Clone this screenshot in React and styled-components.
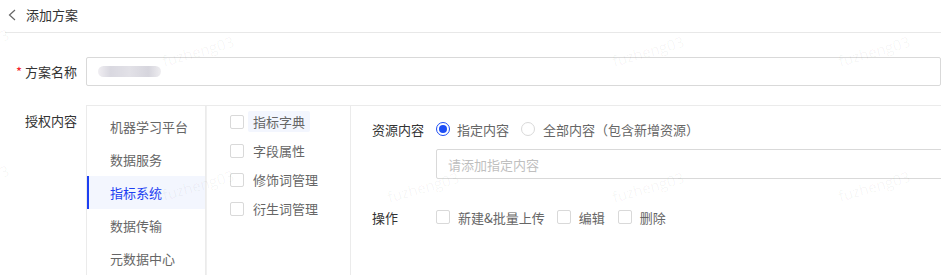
import React from "react";
import styled, { createGlobalStyle } from "styled-components";

const Global = createGlobalStyle`
  html, body { margin: 0; padding: 0; background: #fff; overflow: hidden; }
  body { font-family: "Noto Sans CJK SC", "Noto Sans", sans-serif; font-size: 13px; color: #333; }
  * { box-sizing: border-box; }
`;

const Page = styled.div`
  position: relative;
  width: 941px;
  height: 275px;
  overflow: hidden;
`;

const Header = styled.div`
  margin-left: 5px;
  height: 33px;
  border-bottom: 1px solid #e8e8e8;
  display: flex;
  align-items: center;
  gap: 10px;
  padding-left: 3px;
  padding-bottom: 3px;
  color: #333;
  font-size: 13px;
`;

const Form = styled.div`
  padding-left: 18px;
`;

const Row = styled.div`
  display: flex;
  align-items: ${(p) => (p.$top ? "flex-start" : "center")};
  margin-top: ${(p) => p.$mt}px;
`;

const Label = styled.div`
  width: 68px;
  flex: none;
  padding-right: 9px;
  display: flex;
  justify-content: flex-end;
  white-space: nowrap;
  color: #333;
  line-height: 20px;
  padding-top: ${(p) => (p.$pt ? p.$pt : 0)}px;
`;

const Star = styled.span`
  color: #f5222d;
  margin-right: 3px;
`;

const TextInput = styled.div`
  width: 900px;
  height: 29px;
  border: 1px solid #d9d9d9;
  border-radius: 2px;
  display: flex;
  align-items: center;
  padding-left: 11px;
  color: #bfbfbf;
`;

const Blur = styled.div`
  width: 63px;
  height: 11px;
  border-radius: 6px;
  background: linear-gradient(90deg, #f0eef2 0%, #d9d8e0 20%, #e2e1e7 50%, #d6d5dd 80%, #eeedf0 100%);
  filter: blur(0.6px);
`;

const Box = styled.div`
  display: flex;
  border-top: 1px solid #ebebeb;
  border-left: 1px solid #ebebeb;
  height: 180px;
  flex: 1;
`;

const NavCol = styled.div`
  width: 119px;
  flex: none;
  border-right: 1px solid #ebebeb;
  padding-top: 4px;
`;

const NavItem = styled.div`
  height: 33px;
  display: flex;
  align-items: center;
  padding-left: 21px;
  white-space: nowrap;
  color: ${(p) => (p.$active ? "#1d3ff2" : "#666")};
  background: ${(p) => (p.$active ? "#f3f6fe" : "transparent")};
  border-left: 2px solid ${(p) => (p.$active ? "#1d3ff2" : "transparent")};
`;

const SubCol = styled.div`
  width: 145px;
  flex: none;
  border-left: 1px solid #f0f0f0;
  border-right: 1px solid #ebebeb;
  padding-top: 1px;
  padding-left: 23px;
`;

const SubItem = styled.div`
  height: 29px;
  display: flex;
  align-items: center;
  gap: 4px;
`;

const Check = styled.span`
  width: 14px;
  height: 14px;
  flex: none;
  border: 1px solid #d9d9d9;
  border-radius: 2px;
  background: #fff;
`;

const SubLabel = styled.span`
  padding: 1px 5px;
  border-radius: 2px;
  color: #666;
  line-height: 19px;
  background: ${(p) => (p.$hover ? "#f3f6fe" : "transparent")};
`;

const Detail = styled.div`
  flex: 1;
  padding-top: 12px;
  padding-left: 21px;
`;

const DRow = styled.div`
  display: flex;
  align-items: center;
  height: 22px;
  margin-top: ${(p) => p.$mt || 0}px;
`;

const DLabel = styled.div`
  width: 64px;
  flex: none;
  color: #333;
`;

const Radio = styled.span`
  width: 14px;
  height: 14px;
  flex: none;
  border-radius: 50%;
  border: 1px solid ${(p) => (p.$on ? "#1d4ef5" : "#d9d9d9")};
  display: flex;
  align-items: center;
  justify-content: center;
  &::after {
    content: "";
    width: 8px;
    height: 8px;
    border-radius: 50%;
    background: ${(p) => (p.$on ? "#1d4ef5" : "transparent")};
  }
`;

const Opt = styled.span`
  color: #666;
  white-space: nowrap;
  margin-left: ${(p) => p.$ml}px;
  margin-right: ${(p) => p.$mr || 0}px;
`;

const DInput = styled.div`
  margin-left: 64px;
  margin-top: 9px;
  width: 600px;
  height: 30px;
  border: 1px solid #d9d9d9;
  border-radius: 2px;
  display: flex;
  align-items: center;
  padding-left: 11px;
  color: #bfbfbf;
`;

const Watermarks = styled.div`
  position: absolute;
  inset: 0;
  pointer-events: none;
`;

const Mark = styled.span`
  position: absolute;
  font-family: "Open Sans", sans-serif;
  font-size: 15px;
  color: rgba(0, 0, 0, 0.045);
  transform: translate(-50%, -50%) rotate(-16deg);
  white-space: nowrap;
`;

const marks = [
  [-27, 44], [198, 51], [648, 51], [874, 51],
  [-27, 180], [198, 185], [423, 187], [648, 187], [874, 186],
];

const Chevron = () => (
  <svg width="8" height="12" viewBox="0 0 8 12" fill="none">
    <path d="M7 1L1.5 6L7 11" stroke="#666" strokeWidth="1.2" />
  </svg>
);

export default function App() {
  const nav = ["机器学习平台", "数据服务", "指标系统", "数据传输", "元数据中心"];
  const subs = ["指标字典", "字段属性", "修饰词管理", "衍生词管理"];
  return (
    <Page>
      <Global />
      <Header>
        <Chevron />
        <span>添加方案</span>
      </Header>
      <Form>
        <Row $mt={24}>
          <Label>
            <Star>*</Star>方案名称
          </Label>
          <TextInput>
            <Blur />
          </TextInput>
        </Row>
        <Row $mt={19} $top>
          <Label $pt={6}>授权内容</Label>
          <Box>
            <NavCol>
              {nav.map((n) => (
                <NavItem key={n} $active={n === "指标系统"}>
                  {n}
                </NavItem>
              ))}
            </NavCol>
            <SubCol>
              {subs.map((s, i) => (
                <SubItem key={s}>
                  <Check />
                  <SubLabel $hover={i === 0}>{s}</SubLabel>
                </SubItem>
              ))}
            </SubCol>
            <Detail>
              <DRow>
                <DLabel>资源内容</DLabel>
                <Radio $on />
                <Opt $ml={7} $mr={12}>指定内容</Opt>
                <Radio />
                <Opt $ml={8}>全部内容（包含新增资源）</Opt>
              </DRow>
              <DInput>请添加指定内容</DInput>
              <DRow $mt={27}>
                <DLabel>操作</DLabel>
                <Check />
                <Opt $ml={8} $mr={12}>新建&amp;批量上传</Opt>
                <Check />
                <Opt $ml={8} $mr={13}>编辑</Opt>
                <Check />
                <Opt $ml={8}>删除</Opt>
              </DRow>
            </Detail>
          </Box>
        </Row>
      </Form>
      <Watermarks>
        {marks.map(([x, y], i) => (
          <Mark key={i} style={{ left: x, top: y }}>
            fuzheng03
          </Mark>
        ))}
      </Watermarks>
    </Page>
  );
}
